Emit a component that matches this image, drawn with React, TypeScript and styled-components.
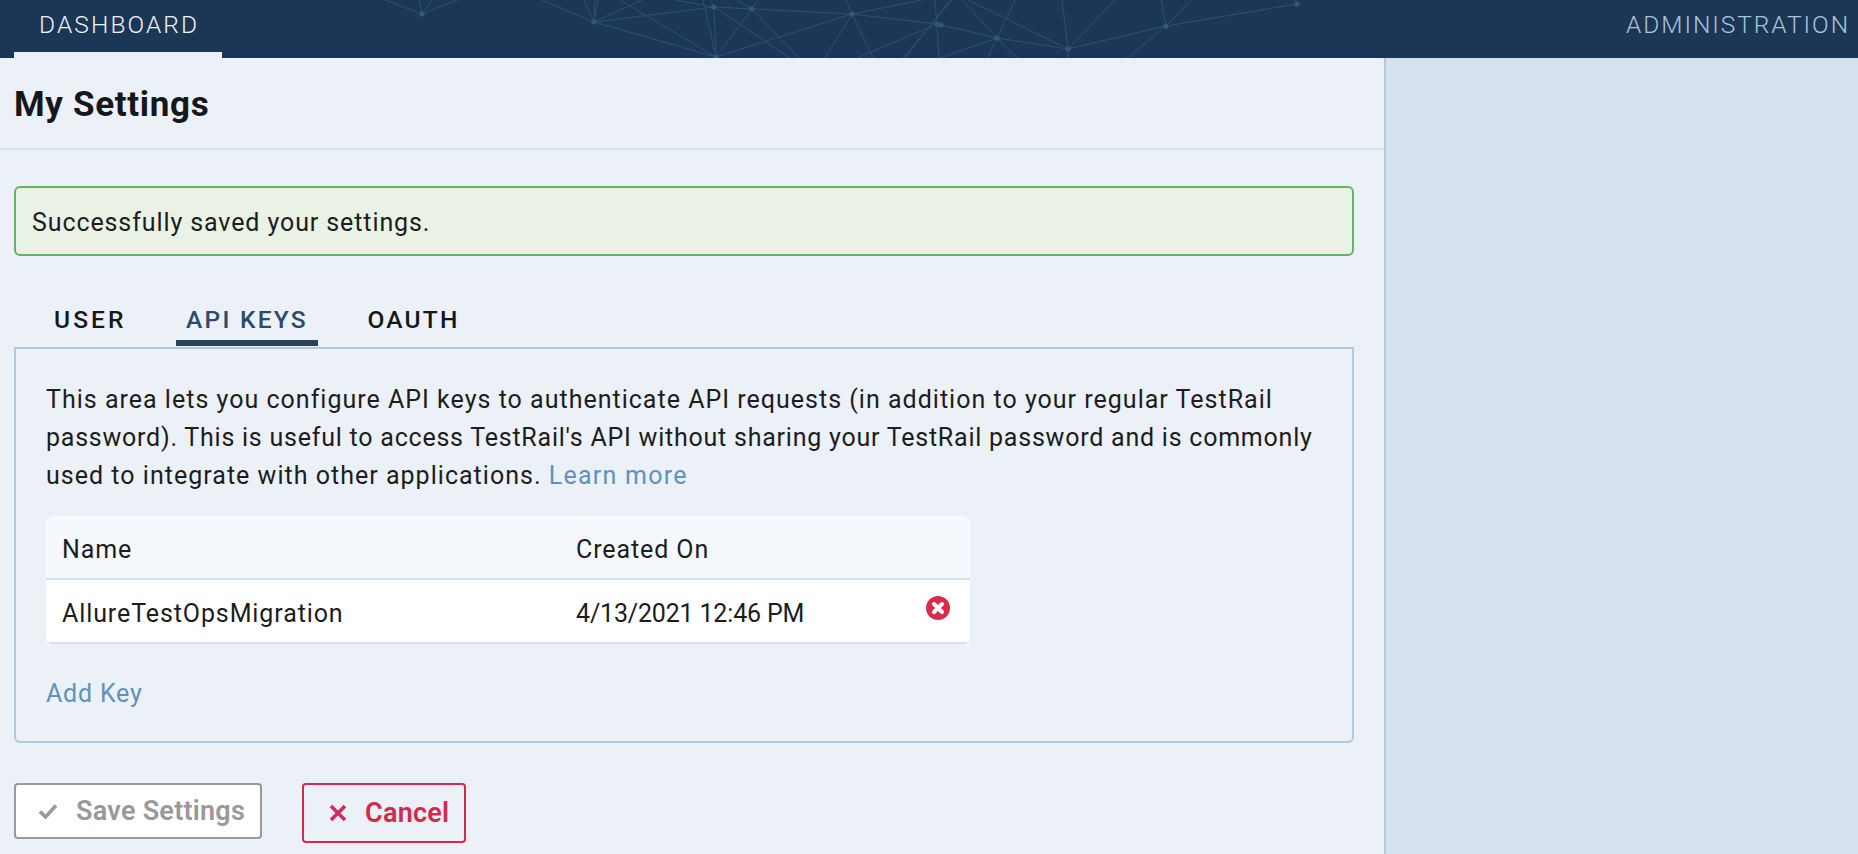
import React from "react";
import styled, { createGlobalStyle } from "styled-components";

const Global = createGlobalStyle`
  html, body { margin: 0; padding: 0; height: 100%; background: #ecf0f7; }
  body { font-family: Roboto, "Liberation Sans", sans-serif; color: #1b1d20; overflow: hidden; }
  #root { height: 100%; }
  * { box-sizing: border-box; }
`;

const Page = styled.div`
  display: flex;
  flex-direction: column;
  height: 854px;
`;

const Header = styled.header`
  position: relative;
  display: flex;
  justify-content: space-between;
  height: 58px;
  flex: none;
  background: #1c3755;
  overflow: hidden;
`;

const Network = styled.svg`
  position: absolute;
  inset: 0;
  width: 100%;
  height: 58px;
`;

const NavItem = styled.a<{ $active?: boolean }>`
  position: relative;
  display: block;
  height: 58px;
  margin-left: ${(p) => (p.$active ? "14px" : "0")};
  padding: ${(p) => (p.$active ? "0 25px" : "0 8px 0 0")};
  width: ${(p) => (p.$active ? "208px" : "auto")};
  font-size: 24.5px;
  font-weight: 300;
  line-height: 50px;
  letter-spacing: ${(p) => (p.$active ? "2.1px" : "1.95px")};
  color: ${(p) => (p.$active ? "#ecf0f7" : "#a9c3da")};
  border-bottom: ${(p) => (p.$active ? "6px solid #ecf0f7" : "none")};
`;

const Body = styled.div`
  display: flex;
  flex: 1;
  min-height: 0;
`;

const Main = styled.main`
  width: 1386px;
  flex: none;
  border-right: 2px solid #b2cadf;
  background: #ecf0f7;
`;

const Aside = styled.aside`
  flex: 1;
  background: #d5e1ed;
`;

const TitleBar = styled.div`
  height: 92px;
  padding: 0 14px;
  border-bottom: 2px solid #d5e1ed;
`;

const Title = styled.h1`
  margin: 0;
  font-size: 35px;
  font-weight: 700;
  line-height: 93px;
  letter-spacing: 0.67px;
  color: #15171a;
`;

const Content = styled.div`
  width: 1340px;
  margin-left: 14px;
`;

const Alert = styled.div`
  height: 70px;
  margin-top: 36px;
  padding: 0 16px;
  border: 2px solid #62b461;
  border-radius: 6px;
  background: #e9f2e5;
  font-size: 25px;
  line-height: 70px;
  letter-spacing: 0.9px;
`;

const Tabs = styled.nav`
  display: flex;
  gap: 39.5px;
  height: 90px;
  padding: 40px 0 0 30px;
`;

const Tab = styled.a<{ $active?: boolean; $wide?: boolean }>`
  display: block;
  height: 50px;
  padding: 0 10px;
  font-size: 24.5px;
  font-weight: 500;
  line-height: 48px;
  letter-spacing: ${(p) => (p.$wide ? "3.1px" : "2.25px")};
  color: ${(p) => (p.$active ? "#2b4b68" : "#15171a")};
  border-bottom: 6px solid ${(p) => (p.$active ? "#2c4159" : "transparent")};
`;

const Panel = styled.section`
  height: 396px;
  margin-top: 1px;
  padding: 32px 30px 0;
  border: 2px solid #b2cadf;
  border-radius: 0 0 6px 6px;
`;

const Intro = styled.p`
  margin: 0;
  font-size: 25px;
  line-height: 38px;
`;

const IntroLine = styled.span<{ $spacing: string }>`
  display: block;
  white-space: nowrap;
  letter-spacing: ${(p) => p.$spacing};
`;

const Link = styled.a`
  color: #5f92bc;
  letter-spacing: 1.25px;
`;

const KeyTable = styled.div`
  width: 924px;
  margin-top: 21px;
  border-radius: 6px;
  overflow: hidden;
`;

const KeyRow = styled.div<{ $head?: boolean }>`
  display: grid;
  grid-template-columns: 514px 1fr 24px;
  height: 64px;
  padding: 15px 20px 0 16px;
  background: ${(p) => (p.$head ? "#f5f9fe" : "#ffffff")};
  border-bottom: 2px solid #d5e1ed;
  font-size: 25px;
  line-height: 38px;
`;

const Cell = styled.span<{ $tight?: boolean }>`
  letter-spacing: ${(p) => (p.$tight ? "-0.17px" : "0.9px")};
`;

const DeleteIcon = styled.svg`
  display: block;
  width: 24px;
  height: 24px;
  margin-top: 1px;
`;

const AddKey = styled(Link)`
  display: block;
  margin-top: 31px;
  font-size: 25px;
  line-height: 38px;
  letter-spacing: 0.8px;
`;

const Actions = styled.div`
  display: flex;
  align-items: flex-start;
  gap: 40px;
  margin-top: 40px;
`;

const Button = styled.button<{ $cancel?: boolean }>`
  display: flex;
  align-items: center;
  width: ${(p) => (p.$cancel ? "164px" : "248px")};
  height: ${(p) => (p.$cancel ? "60px" : "56px")};
  padding: ${(p) => (p.$cancel ? "0 0 0 24px" : "0 0 0 22px")};
  gap: ${(p) => (p.$cancel ? "17px" : "18px")};
  border: 2px solid ${(p) => (p.$cancel ? "#d32a4c" : "#999999")};
  border-radius: 4px;
  background: ${(p) => (p.$cancel ? "transparent" : "#ffffff")};
  color: ${(p) => (p.$cancel ? "#d32a4c" : "#999999")};
  font-family: inherit;
  font-size: 27px;
  font-weight: 600;
  letter-spacing: 0.25px;
`;

const ButtonIcon = styled.svg`
  flex: none;
  width: 20px;
  height: 20px;
`;

const edges: number[][] = [
  [422,14,385,0],[422,14,419,0],[422,14,432,0],[422,14,457,0],
  [594,22,542,0],[594,22,584,0],[594,22,595,0],[594,22,598,0],[594,22,642,0],[594,22,714,7],[594,22,716,57],
  [714,7,752,9],[714,7,675,0],[714,7,711,0],[752,9,737,0],[752,9,758,0],[620,0,716,57],[714,7,716,57],[703,0,716,57],
  [752,9,716,57],[714,7,790,58],[752,9,799,58],[716,57,852,14],[752,9,852,14],
  [852,14,922,0],[852,14,937,24],[852,14,846,0],[852,14,825,58],[852,14,873,58],
  [937,24,935,0],[937,24,939,58],[937,24,857,58],[952,0,903,58],[950,0,905,58],
  [941,25,997,38],[997,38,962,0],[997,38,1015,0],[997,38,988,58],[997,38,1017,58],[997,38,940,58],
  [997,38,1068,49],[1068,49,968,0],[1068,49,1062,0],[1068,49,1115,0],[1068,49,1068,58],[1068,49,1166,26],
  [1166,26,1161,0],[1166,26,1191,0],[1166,26,1127,58],[1166,26,1297,4],[1297,4,1295,0],
];
const nodes: number[][] = [
  [422,14],[594,22],[714,7],[752,9],[716,57],[852,14],[937,24],[941,25],[997,38],[1068,49],[1166,26],[1297,4],
];

export default function App() {
  return (
    <Page>
      <Global />
      <Header>
        <Network viewBox="0 0 1858 58" aria-hidden="true">
          {edges.map((e, i) => (
            <line key={i} x1={e[0]} y1={e[1]} x2={e[2]} y2={e[3]} stroke="#2f4f70" strokeWidth="1" />
          ))}
          {nodes.map((n, i) => (
            <circle key={i} cx={n[0]} cy={n[1]} r="2.6" fill="#34587a" />
          ))}
        </Network>
        <NavItem $active>DASHBOARD</NavItem>
        <NavItem>ADMINISTRATION</NavItem>
      </Header>
      <Body>
        <Main>
          <TitleBar>
            <Title>My Settings</Title>
          </TitleBar>
          <Content>
            <Alert>Successfully saved your settings.</Alert>
            <Tabs>
              <Tab $wide>USER</Tab>
              <Tab $active>API KEYS</Tab>
              <Tab>OAUTH</Tab>
            </Tabs>
            <Panel>
              <Intro>
                <IntroLine $spacing="1.01px">
                  This area lets you configure API keys to authenticate API requests (in addition to your regular TestRail
                </IntroLine>
                <IntroLine $spacing="0.77px">
                  password). This is useful to access TestRail's API without sharing your TestRail password and is commonly
                </IntroLine>
                <IntroLine $spacing="1.02px">
                  used to integrate with other applications. <Link>Learn more</Link>
                </IntroLine>
              </Intro>
              <KeyTable>
                <KeyRow $head>
                  <Cell>Name</Cell>
                  <Cell>Created On</Cell>
                </KeyRow>
                <KeyRow>
                  <Cell>AllureTestOpsMigration</Cell>
                  <Cell $tight>4/13/2021 12:46 PM</Cell>
                  <DeleteIcon viewBox="0 0 24 24" aria-hidden="true">
                    <circle cx="12" cy="12" r="12" fill="#d92c4c" />
                    <path d="M8 8l8 8M16 8l-8 8" stroke="#fff" strokeWidth="4" strokeLinecap="round" />
                  </DeleteIcon>
                </KeyRow>
              </KeyTable>
              <AddKey>Add Key</AddKey>
            </Panel>
            <Actions>
              <Button>
                <ButtonIcon viewBox="0 0 20 20" aria-hidden="true">
                  <path d="M2 10.5l5.5 5.5L18 4.5" fill="none" stroke="#999999" strokeWidth="3.6" />
                </ButtonIcon>
                Save Settings
              </Button>
              <Button $cancel>
                <ButtonIcon viewBox="0 0 20 20" aria-hidden="true">
                  <path d="M3 3l14 14M17 3L3 17" fill="none" stroke="#d42a62" strokeWidth="3.6" />
                </ButtonIcon>
                Cancel
              </Button>
            </Actions>
          </Content>
        </Main>
        <Aside />
      </Body>
    </Page>
  );
}
